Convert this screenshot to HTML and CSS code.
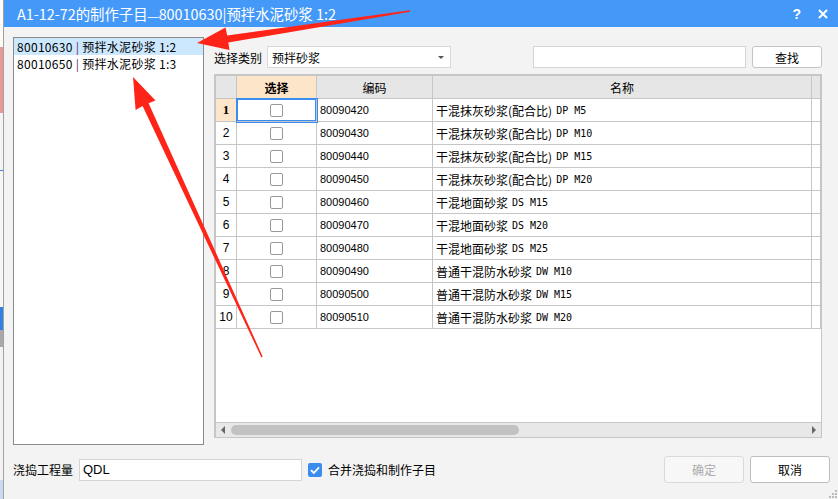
FILE: index.html
```html
<!DOCTYPE html>
<html>
<head>
<meta charset="utf-8">
<link rel="stylesheet" href="styles.css">
</head>
<body>
<div class="screen">
  <div class="bgstrip">
    <div class="seg s-a"></div>
    <div class="seg s-pink"></div>
    <div class="seg s-b"></div>
    <div class="seg s-line"></div>
    <div class="seg s-c"></div>
    <div class="seg s-blue"></div>
    <div class="seg s-grey"></div>
    <div class="seg s-d"></div>
    <div class="seg s-lb"></div>
  </div>
  <div class="dialog">
    <div class="titlebar">
      <span class="title">A1-12-72的制作子目<span class="dash">—</span>80010630|预拌水泥砂浆 1:2</span>
      <span class="tb-btns">
        <span class="help">?</span>
        <svg class="close" width="10" height="10" viewBox="0 0 10 10"><path d="M1 1L9 9M9 1L1 9" stroke="#fff" stroke-width="2" fill="none"/></svg>
      </span>
    </div>
    <div class="content">
      <div class="main">
        <div class="list">
          <div class="item sel">80010630 <span class="bar">|</span> 预拌水泥砂浆 1:2</div>
          <div class="item">80010650 <span class="bar">|</span> 预拌水泥砂浆 1:3</div>
        </div>
        <div class="right">
          <div class="toolbar">
            <span class="lbl">选择类别</span>
            <div class="select">预拌砂浆<span class="caret"></span></div>
            <div class="search"></div>
            <div class="btn">查找</div>
          </div>
          <div class="grid">
            <div class="row head">
              <div class="c rh"></div>
              <div class="c hsel">选择</div>
              <div class="c">编码</div>
              <div class="c">名称</div>
              <div class="c"></div>
            </div>
            <div class="row">
              <div class="c rh cur">1</div>
              <div class="c chk focus"><span class="box"></span></div>
              <div class="c code">80090420</div>
              <div class="c name">干混抹灰砂浆(配合比) <span class="lat">DP M5</span></div>
              <div class="c"></div>
            </div>
            <div class="row">
              <div class="c rh">2</div>
              <div class="c chk"><span class="box"></span></div>
              <div class="c code">80090430</div>
              <div class="c name">干混抹灰砂浆(配合比) <span class="lat">DP M10</span></div>
              <div class="c"></div>
            </div>
            <div class="row">
              <div class="c rh">3</div>
              <div class="c chk"><span class="box"></span></div>
              <div class="c code">80090440</div>
              <div class="c name">干混抹灰砂浆(配合比) <span class="lat">DP M15</span></div>
              <div class="c"></div>
            </div>
            <div class="row">
              <div class="c rh">4</div>
              <div class="c chk"><span class="box"></span></div>
              <div class="c code">80090450</div>
              <div class="c name">干混抹灰砂浆(配合比) <span class="lat">DP M20</span></div>
              <div class="c"></div>
            </div>
            <div class="row">
              <div class="c rh">5</div>
              <div class="c chk"><span class="box"></span></div>
              <div class="c code">80090460</div>
              <div class="c name">干混地面砂浆 <span class="lat">DS M15</span></div>
              <div class="c"></div>
            </div>
            <div class="row">
              <div class="c rh">6</div>
              <div class="c chk"><span class="box"></span></div>
              <div class="c code">80090470</div>
              <div class="c name">干混地面砂浆 <span class="lat">DS M20</span></div>
              <div class="c"></div>
            </div>
            <div class="row">
              <div class="c rh">7</div>
              <div class="c chk"><span class="box"></span></div>
              <div class="c code">80090480</div>
              <div class="c name">干混地面砂浆 <span class="lat">DS M25</span></div>
              <div class="c"></div>
            </div>
            <div class="row">
              <div class="c rh">8</div>
              <div class="c chk"><span class="box"></span></div>
              <div class="c code">80090490</div>
              <div class="c name">普通干混防水砂浆 <span class="lat">DW M10</span></div>
              <div class="c"></div>
            </div>
            <div class="row">
              <div class="c rh">9</div>
              <div class="c chk"><span class="box"></span></div>
              <div class="c code">80090500</div>
              <div class="c name">普通干混防水砂浆 <span class="lat">DW M15</span></div>
              <div class="c"></div>
            </div>
            <div class="row">
              <div class="c rh">10</div>
              <div class="c chk"><span class="box"></span></div>
              <div class="c code">80090510</div>
              <div class="c name">普通干混防水砂浆 <span class="lat">DW M20</span></div>
              <div class="c"></div>
            </div>
            <div class="blank"></div>
            <div class="hscroll">
              <span class="arr-l"></span>
              <span class="thumb"></span>
              <span class="arr-r"></span>
            </div>
          </div>
        </div>
      </div>
      <div class="bottom">
        <span class="lbl2">浇捣工程量</span>
        <div class="qty">QDL</div>
        <span class="cb"><svg width="14" height="14" viewBox="0 0 14 14"><path d="M3 7.2L5.8 10L11 4.3" stroke="#fff" stroke-width="1.8" fill="none"/></svg></span>
        <span class="cblbl">合并浇捣和制作子目</span>
        <div class="bbtns">
          <div class="dbtn disabled">确定</div>
          <div class="dbtn">取消</div>
        </div>
      </div>
    </div>
    <svg class="grip" width="8" height="8" viewBox="0 0 8 8"><rect x="6" y="0" width="2" height="2" fill="#bbb"/><rect x="3" y="3" width="2" height="2" fill="#bbb"/><rect x="6" y="3" width="2" height="2" fill="#bbb"/><rect x="0" y="6" width="2" height="2" fill="#bbb"/><rect x="3" y="6" width="2" height="2" fill="#bbb"/><rect x="6" y="6" width="2" height="2" fill="#bbb"/></svg>
  </div>
</div>
<svg class="arrows" width="838" height="499" viewBox="0 0 838 499">
  <polygon fill="#ff2418" points="197,43 229.5,50 228.3,42.5 410.1,11.8 409.9,10.2 227.2,35.5 225.5,27.5"/>
  <polygon fill="#ff2418" points="133,77 155.5,100.5 148.6,103.2 262.7,356.7 261.3,357.3 142.6,106 135.6,110"/>
</svg>
</body>
</html>
```
FILE: styles.css
```css
html, body {
  margin: 0;
  padding: 0;
}
body {
  width: 838px;
  height: 499px;
  overflow: hidden;
  position: relative;
  background: #f3f3f3;
  font-family: "Noto Sans CJK SC", "Liberation Sans", sans-serif;
  font-size: 12px;
  color: #000;
}
.screen {
  display: flex;
  height: 499px;
}
.bgstrip {
  width: 4px;
  flex: none;
  box-sizing: border-box;
  border-right: 1px solid #a0a0a0;
  display: flex;
  flex-direction: column;
  background: #f4f4f4;
}
.seg { flex: none; }
.s-a { height: 47px; background: #fbfbfb; }
.s-pink { height: 66px; background: #e99a98; }
.s-b { height: 57px; background: #f4f4f4; }
.s-line { height: 1px; background: #3b82d6; }
.s-c { height: 136px; background: #f6f6f6; }
.s-blue { height: 23px; background: #3180e2; }
.s-grey { height: 17px; background: #a9a9a9; }
.s-d { height: 133px; background: #f2f2f2; }
.s-lb { height: 19px; background: #c9d9f0; }

.dialog {
  flex: 1;
  display: flex;
  flex-direction: column;
  position: relative;
}
.titlebar {
  height: 27px;
  flex: none;
  background: #4499f8;
  color: #fff;
  display: flex;
  align-items: center;
  padding-left: 13px;
}
.title {
  font-size: 14.4px;
  white-space: nowrap;
}
.dash {
  font-family: "Liberation Sans", sans-serif;
  font-size: 11px;
}
.tb-btns {
  margin-left: auto;
  display: flex;
  align-items: center;
  gap: 17px;
  padding-right: 10px;
}
.help {
  font-family: "Liberation Sans", sans-serif;
  font-weight: bold;
  font-size: 14px;
}
.content {
  padding: 10px 0 0 9px;
}
.main {
  display: flex;
  gap: 10px;
  height: 408px;
}
.list {
  width: 191px;
  height: 408px;
  box-sizing: border-box;
  border: 1px solid #8a8a8a;
  background: #fff;
}
.item {
  height: 17px;
  line-height: 17px;
  font-size: 12px;
  letter-spacing: 0.3px;
  padding-left: 3px;
  white-space: nowrap;
  overflow: hidden;
}
.item.sel { background: #cce8ff; }
.bar { color: #6b2a5b; }

.right {
  width: 608px;
  display: flex;
  flex-direction: column;
  padding-top: 9px;
}
.toolbar {
  display: flex;
  align-items: center;
  height: 22px;
}
.lbl {
  width: 53px;
  white-space: nowrap;
}
.select {
  width: 184px;
  height: 22px;
  box-sizing: border-box;
  border: 1px solid #d9d9d9;
  background: #fff;
  display: flex;
  align-items: center;
  padding-left: 4px;
}
.caret {
  margin-left: auto;
  margin-right: 6px;
  width: 0;
  height: 0;
  border-left: 3px solid transparent;
  border-right: 3px solid transparent;
  border-top: 3px solid #555;
}
.search {
  margin-left: auto;
  width: 213px;
  height: 22px;
  box-sizing: border-box;
  border: 1px solid #d4d4d4;
  background: #fff;
}
.btn {
  margin-left: 6px;
  width: 70px;
  height: 22px;
  box-sizing: border-box;
  border: 1px solid #c4c4c4;
  border-radius: 3px;
  background: #fff;
  display: flex;
  align-items: center;
  justify-content: center;
}
.grid {
  margin-top: 6px;
  height: 364px;
  box-sizing: border-box;
  border: 2px solid #c6c6c6;
  border-right-width: 1px;
  border-bottom-width: 1px;
  background: #fff;
  display: flex;
  flex-direction: column;
}
.row {
  display: grid;
  grid-template-columns: 21px 80px 116px 379px 1fr;
  height: 23px;
  flex: none;
}
.c {
  box-sizing: border-box;
  border-right: 1px solid #c6c6c6;
  border-bottom: 1px solid #c6c6c6;
  display: flex;
  align-items: center;
  font-size: 12px;
  white-space: nowrap;
  overflow: hidden;
}
.head .c {
  background: #e6e6e6;
  justify-content: center;
}
.head .c.hsel {
  background: #fde5c9;
  font-weight: bold;
}
.rh {
  justify-content: center;
  font-family: "Liberation Sans", sans-serif;
  font-size: 12px;
}
.rh.cur {
  background: #fde5c9;
  font-family: "Liberation Serif", serif;
  font-weight: bold;
  font-size: 13px;
}
.chk {
  justify-content: center;
}
.chk.focus {
  position: relative;
  box-shadow: 0 0 0 1px #3b8cf0, inset 0 0 0 1px #3b8cf0;
}
.box {
  width: 13px;
  height: 13px;
  box-sizing: border-box;
  border: 1px solid #999;
  border-radius: 2px;
  background: #fff;
}
.code {
  padding-left: 3px;
  font-family: "Liberation Sans", sans-serif;
  font-size: 11px;
}
.name {
  padding-left: 3px;
}
.lat {
  font-family: "DejaVu Sans Mono", monospace;
  font-size: 10px;
  margin-left: 4px;
}
.blank {
  flex: 1;
}
.hscroll {
  height: 15px;
  flex: none;
  box-sizing: border-box;
  border-top: 1px solid #c6c6c6;
  background: #e8e8e8;
  display: flex;
  align-items: center;
  padding-left: 5px;
}
.arr-l {
  width: 0;
  height: 0;
  border-top: 4px solid transparent;
  border-bottom: 4px solid transparent;
  border-right: 4px solid #666;
}
.thumb {
  margin-left: 6px;
  width: 288px;
  height: 10px;
  border-radius: 5px;
  background: #c2c2c2;
}
.arr-r {
  margin-left: auto;
  margin-right: 5px;
  width: 0;
  height: 0;
  border-top: 4px solid transparent;
  border-bottom: 4px solid transparent;
  border-left: 4px solid #666;
}
.bottom {
  display: flex;
  align-items: center;
  margin-top: 11px;
  height: 27px;
  padding-right: 8px;
}
.lbl2 {
  width: 66px;
  white-space: nowrap;
}
.qty {
  width: 223px;
  height: 22px;
  box-sizing: border-box;
  border: 1px solid #d4d4d4;
  background: #fff;
  display: flex;
  align-items: center;
  padding-left: 3px;
  font-family: "Liberation Sans", sans-serif;
  font-size: 13px;
}
.cb {
  margin-left: 6px;
  width: 14px;
  height: 14px;
  border-radius: 2px;
  background: #3c8cf0;
  display: flex;
}
.cblbl {
  margin-left: 6px;
  white-space: nowrap;
}
.bbtns {
  margin-left: auto;
  display: flex;
  gap: 6px;
}
.dbtn {
  width: 80px;
  height: 27px;
  box-sizing: border-box;
  border: 1px solid #bdbdbd;
  border-radius: 3px;
  background: #fff;
  display: flex;
  align-items: center;
  justify-content: center;
}
.dbtn.disabled {
  border-color: #dadada;
  color: #ababab;
  background: #f7f7f7;
}
.grip {
  position: absolute;
  right: 1px;
  bottom: 1px;
}
.arrows {
  position: absolute;
  left: 0;
  top: 0;
  pointer-events: none;
}
```
